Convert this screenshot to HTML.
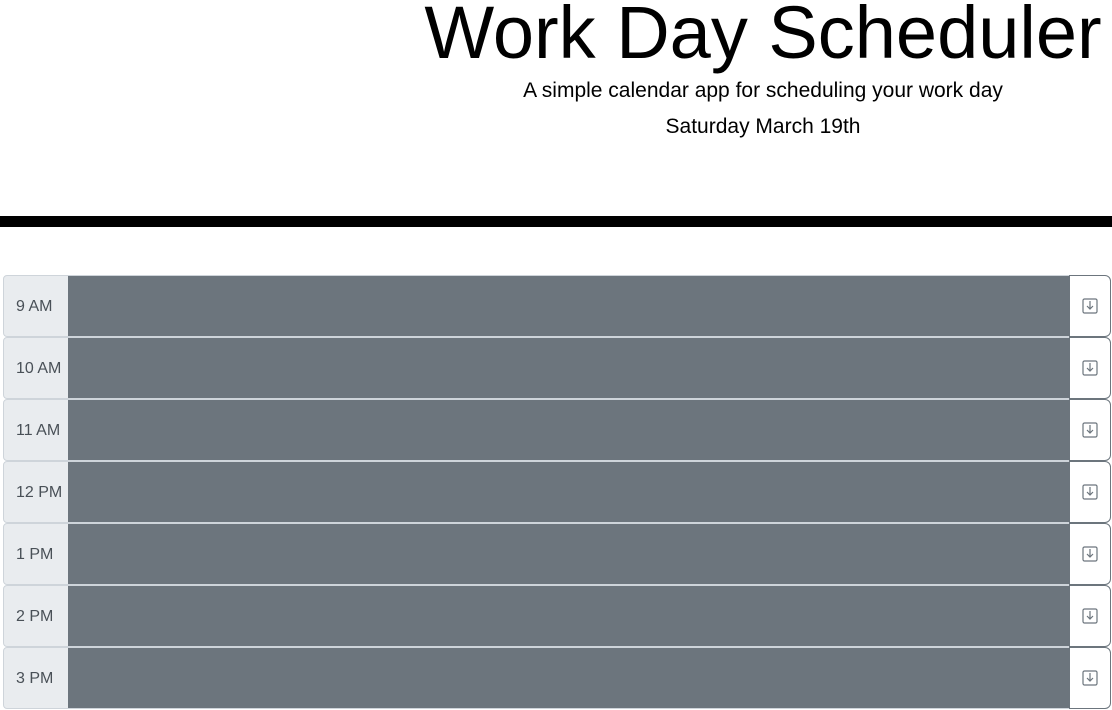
<!DOCTYPE html>
<html><head><style>
body{margin:0;width:1112px;height:703px;overflow:hidden;background:#fff;font-family:"Liberation Sans","DejaVu Sans",sans-serif;position:relative}
.c{position:absolute;left:413px;width:700px;text-align:center;white-space:nowrap}
h1{margin:0;font-weight:400;font-size:74px;top:-9px;color:#000;line-height:84px}
.bar{position:absolute;left:0;top:216px;width:1112px;height:11px;background:#000}
.row{position:absolute;left:3px;width:1108px;height:62px}
.lab{position:absolute;left:0;top:0;height:60px;background:#e9ecef;border:1px solid #ced4da;border-radius:4px 0 0 4px;font-size:16px;color:#495057;line-height:62px;padding-left:12px;width:52px}
.ta{position:absolute;left:65px;top:0;width:1001px;height:60px;background:#6c757d;border:1px solid #ced4da;border-left:none;border-right:none}
.btn{position:absolute;left:1066px;top:0;width:40px;height:60px;background:#fff;border:1px solid #6c757d;border-radius:0 6px 6px 0}
.btn svg{position:absolute;left:12px;top:22px}
</style></head><body>
<h1 class="c">Work Day Scheduler</h1>
<div class="c" style="top:79px;font-size:21px">A simple calendar app for scheduling your work day</div>
<div class="c" style="top:115px;font-size:21px">Saturday March 19th</div>
<div class="bar"></div>
<div class="row" style="top:275px"><div class="lab">9 AM</div><div class="ta"></div><div class="btn"><svg width="16" height="16" viewBox="0 0 16 16" fill="none" stroke="#6c757d" stroke-width="1.2"><rect x="1" y="1" width="14" height="14" rx="1.5"/><path d="M8 3v8M5 8l3 3 3-3"/></svg></div></div>
<div class="row" style="top:337px"><div class="lab">10 AM</div><div class="ta"></div><div class="btn"><svg width="16" height="16" viewBox="0 0 16 16" fill="none" stroke="#6c757d" stroke-width="1.2"><rect x="1" y="1" width="14" height="14" rx="1.5"/><path d="M8 3v8M5 8l3 3 3-3"/></svg></div></div>
<div class="row" style="top:399px"><div class="lab">11 AM</div><div class="ta"></div><div class="btn"><svg width="16" height="16" viewBox="0 0 16 16" fill="none" stroke="#6c757d" stroke-width="1.2"><rect x="1" y="1" width="14" height="14" rx="1.5"/><path d="M8 3v8M5 8l3 3 3-3"/></svg></div></div>
<div class="row" style="top:461px"><div class="lab">12 PM</div><div class="ta"></div><div class="btn"><svg width="16" height="16" viewBox="0 0 16 16" fill="none" stroke="#6c757d" stroke-width="1.2"><rect x="1" y="1" width="14" height="14" rx="1.5"/><path d="M8 3v8M5 8l3 3 3-3"/></svg></div></div>
<div class="row" style="top:523px"><div class="lab">1 PM</div><div class="ta"></div><div class="btn"><svg width="16" height="16" viewBox="0 0 16 16" fill="none" stroke="#6c757d" stroke-width="1.2"><rect x="1" y="1" width="14" height="14" rx="1.5"/><path d="M8 3v8M5 8l3 3 3-3"/></svg></div></div>
<div class="row" style="top:585px"><div class="lab">2 PM</div><div class="ta"></div><div class="btn"><svg width="16" height="16" viewBox="0 0 16 16" fill="none" stroke="#6c757d" stroke-width="1.2"><rect x="1" y="1" width="14" height="14" rx="1.5"/><path d="M8 3v8M5 8l3 3 3-3"/></svg></div></div>
<div class="row" style="top:647px"><div class="lab">3 PM</div><div class="ta"></div><div class="btn"><svg width="16" height="16" viewBox="0 0 16 16" fill="none" stroke="#6c757d" stroke-width="1.2"><rect x="1" y="1" width="14" height="14" rx="1.5"/><path d="M8 3v8M5 8l3 3 3-3"/></svg></div></div>
</body></html>
